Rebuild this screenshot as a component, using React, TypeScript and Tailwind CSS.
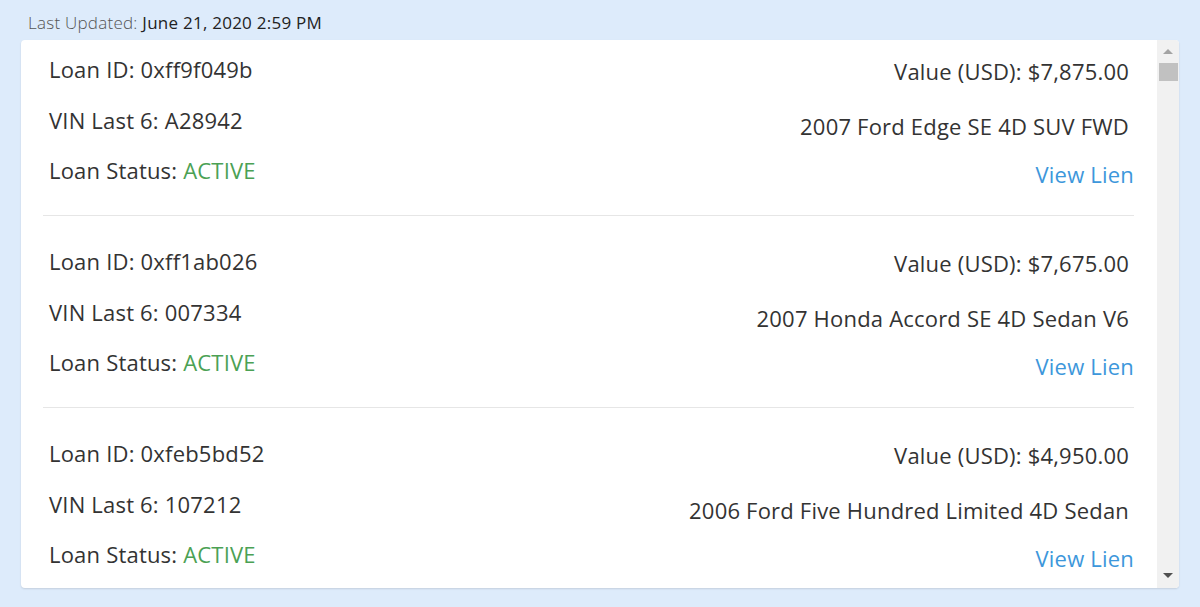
import React from "react";

const loans = [
  { id: "0xff9f049b", vin: "A28942", value: "$7,875.00", car: "2007 Ford Edge SE 4D SUV FWD" },
  { id: "0xff1ab026", vin: "007334", value: "$7,675.00", car: "2007 Honda Accord SE 4D Sedan V6" },
  { id: "0xfeb5bd52", vin: "107212", value: "$4,950.00", car: "2006 Ford Five Hundred Limited 4D Sedan" },
];

export default function App() {
  return (
    <div
      className="w-[1200px] h-[607px] bg-[#ddebfb] overflow-hidden text-[#333333]"
      style={{ fontFamily: '"Open Sans", "Noto Sans", sans-serif' }}
    >
      <div className="h-[40px] pl-[28px] pt-[11px] text-[17px] leading-[24px] tracking-[0.25px]">
        <span className="text-[#555555] font-light">Last Updated: </span>
        <span className="text-[#222222]">June 21, 2020 2:59 PM</span>
      </div>
      <div className="ml-[21px] w-[1158px] h-[548px] bg-white rounded-[4px] shadow-[0_1px_2px_rgba(0,0,0,0.12)] flex overflow-hidden">
        <div className="flex-1 overflow-hidden pl-[22px] pr-[23px]">
          <div className="-mt-[16px]">
            {loans.map((l, i) => (
              <div
                key={l.id}
                className={`flex justify-between h-[192px] ${i < loans.length - 1 ? "border-b border-[#e6e6e6]" : ""}`}
              >
                <div className="flex flex-col pl-[6px] pt-[30px] text-[22px] leading-[30px] tracking-[0.2px]">
                  <div>Loan ID: {l.id}</div>
                  <div className="mt-[21px]">VIN Last 6: {l.vin}</div>
                  <div className="mt-[20px]">
                    Loan Status: <span className="text-[#4ba154]">ACTIVE</span>
                  </div>
                </div>
                <div className="flex flex-col items-end pt-[32px] text-[22px] leading-[30px] tracking-[0.2px]">
                  <div className="pr-[5px]">Value (USD): {l.value}</div>
                  <div className="mt-[25px] pr-[5px]">{l.car}</div>
                  <div className="mt-[18px] text-[#3d97db]">View Lien</div>
                </div>
              </div>
            ))}
          </div>
        </div>
        <div className="w-[22px] bg-[#f1f1f1] flex flex-col items-center">
          <div className="h-[20px] flex items-center justify-center pt-[2px]">
            <div className="w-0 h-0 border-l-[5px] border-r-[5px] border-b-[5px] border-l-transparent border-r-transparent border-b-[#a3a3a3]" />
          </div>
          <div className="w-[19px] h-[18px] bg-[#c1c1c1] mt-[3px]" />
          <div className="flex-1" />
          <div className="h-[20px] flex items-center justify-center pb-[6px]">
            <div className="w-0 h-0 border-l-[5px] border-r-[5px] border-t-[5px] border-l-transparent border-r-transparent border-t-[#505050]" />
          </div>
        </div>
      </div>
    </div>
  );
}
